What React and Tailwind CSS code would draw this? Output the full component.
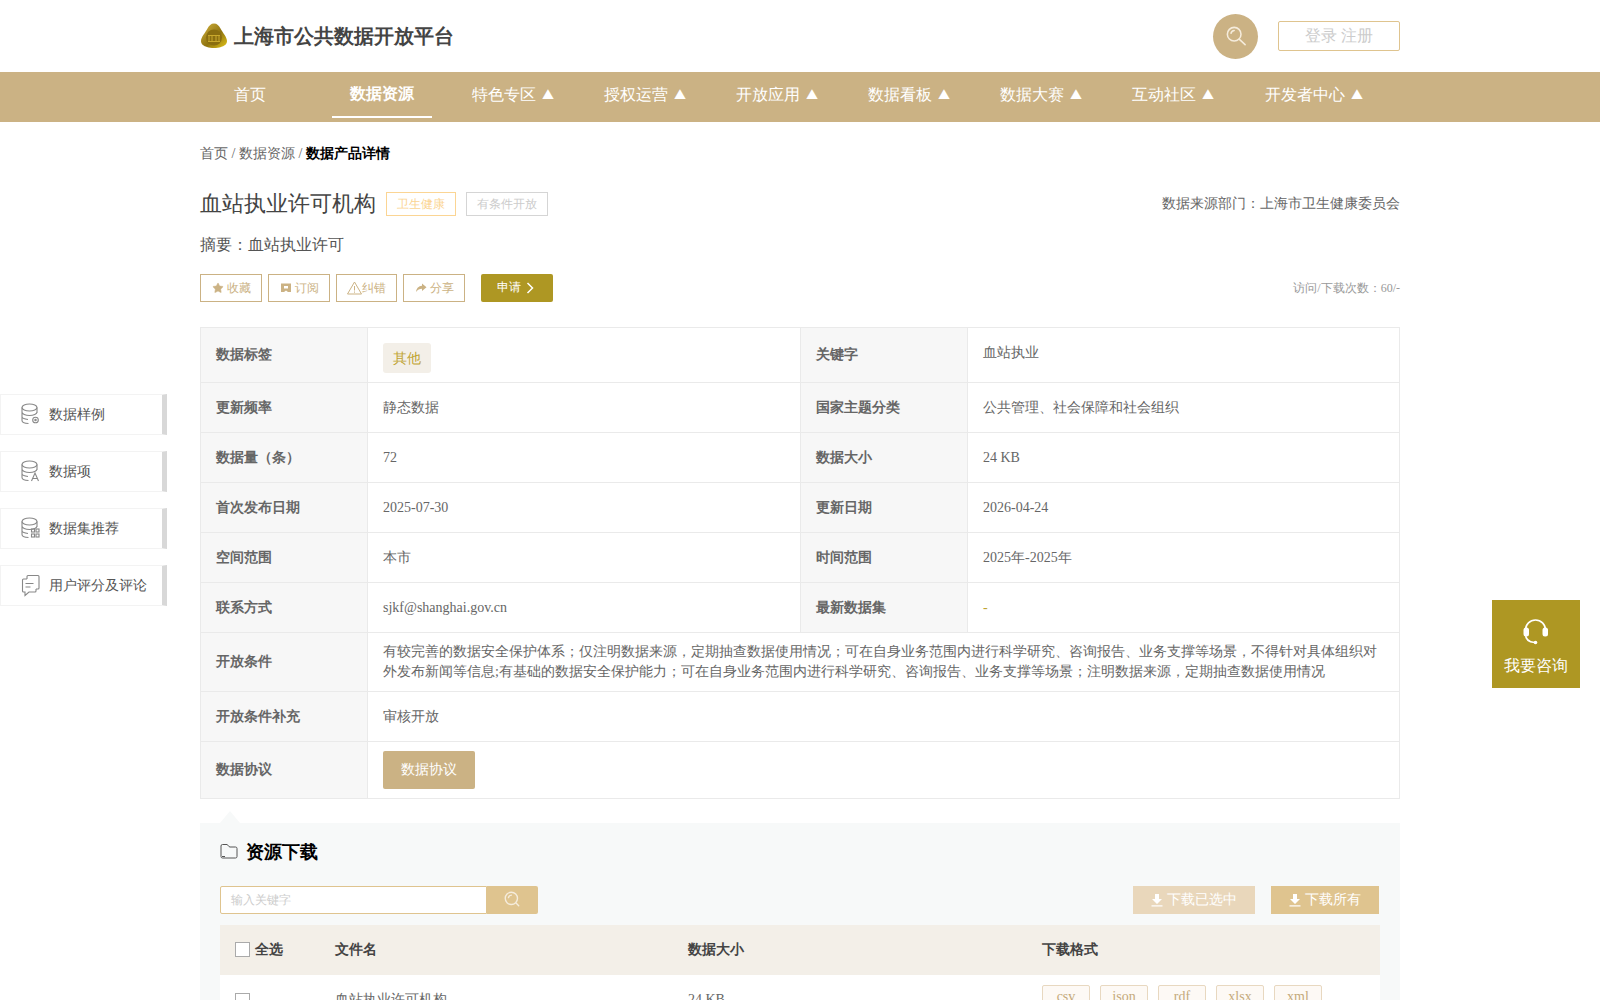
import React from "react";
import { Star } from "lucide-react";

const FONT = '"Liberation Serif", serif';

const Logo = () => (
  <svg width="28" height="26" viewBox="0 0 28 26" className="shrink-0">
    <defs>
      <linearGradient id="g" x1="0" y1="0" x2="1" y2="1">
        <stop offset="0" stopColor="#d8b640" />
        <stop offset="0.55" stopColor="#8f7410" />
        <stop offset="1" stopColor="#e2c418" />
      </linearGradient>
    </defs>
    <path d="M14 .5c3 0 5 2 6.500 5 2 4 6.500 8.500 6.500 12.500 0 3.500-3 5-6 6-4 1.300-10 1.300-14 0-3-1-6-2.500-6-6 0-4 4.500-8.500 6.500-12.500 1.500-3 3.500-5 6.500-5z" fill="url(#g)" />
    <circle cx="14" cy="14.500" r="8" fill="#8a6e10" />
    <path d="M8 12.500h12M9 12.500v6M12 12.500v6M16 12.500v6M19 12.500v6M8 18.500h12" stroke="#c9a92e" strokeWidth="1" fill="none" />
  </svg>
);

const Search = ({ size = 20, handle = true }) => (
  <svg width={size} height={size} viewBox="0 0 22 22" fill="none" stroke="#f5ecdc" strokeWidth="1.700">
    <circle cx="9" cy="9" r="7.500" />
    <path d={handle ? "M14.500 14.500l6.500 6" : "M15 15l3 3"} strokeLinecap="round" />
    <path d="M5.500 8a4 4 0 0 1 3.500-3" strokeLinecap="round" />
  </svg>
);

const DbBase = () => (
  <>
    <ellipse cx="8.500" cy="4.500" rx="7.500" ry="3.500" />
    <path d="M1 4.500v13c0 1.600 3 2.800 6.500 3M1 9c0 1.900 3.400 3.500 7.500 3.500S16 10.900 16 9M16 4.500V10M1 13.500c0 1.500 2.600 2.700 6 3" />
  </>
);

const side = [
  {
    t: "数据样例",
    i: (
      <>
        <DbBase />
        <circle cx="14.500" cy="17" r="2.800" />
        <circle cx="14.500" cy="17" r="0.700" />
      </>
    ),
  },
  {
    t: "数据项",
    i: (
      <>
        <DbBase />
        <path d="M10.500 21l3.500-8 3.500 8M11.800 18.500h4.600" />
      </>
    ),
  },
  {
    t: "数据集推荐",
    i: (
      <>
        <DbBase />
        <rect x="10.500" y="12" width="3" height="3" />
        <rect x="15" y="12" width="3" height="3" />
        <rect x="10.500" y="17" width="3" height="3" />
        <rect x="15" y="17" width="3" height="3" />
      </>
    ),
  },
  {
    t: "用户评分及评论",
    i: (
      <>
        <path d="M6 5H2.500A1 1 0 0 0 1.500 6v11a1 1 0 0 0 1 1H4v3.500L8 18h6a1 1 0 0 0 1-1v-2" />
        <path d="M6 5V2.500a1 1 0 0 1 1-1h10a1 1 0 0 1 1 1V14a1 1 0 0 1-1 1H15" />
        <path d="M4.500 9.500h8M4.500 13h5" />
      </>
    ),
  },
];

const navItems = ["特色专区", "授权运营", "开放应用", "数据看板", "数据大赛", "互动社区"];

const Tri = () => <span className="inline-block w-[16px] text-center font-['Noto_Sans_CJK_SC'] text-[12px] leading-none">▲</span>;

const Label = ({ children }) => (
  <td className="border border-[#eaeaea] bg-[#f7f7f7] pb-[1px] pl-[15px] text-[14px] font-bold text-[#666]">{children}</td>
);
const Val = ({ children, span, className = "" }) => (
  <td colSpan={span} className={`border border-[#eaeaea] px-[15px] text-[14px] text-[#666] ${className}`}>
    {children}
  </td>
);

const Row = ({ h, a, b, c, d }) => (
  <tr className={h}>
    <Label>{a}</Label>
    <Val>{b}</Val>
    <Label>{c}</Label>
    <Val>{d}</Val>
  </tr>
);

const ActionBtn = ({ w, icon, t, gap = "gap-[3px]" }) => (
  <div className={`flex ${w} h-[28px] items-center justify-center ${gap} border border-[#cbb284] text-[12px] text-[#cbb284]`}>
    {icon}
    <span>{t}</span>
  </div>
);

const Dl = () => (
  <svg width="14" height="14" viewBox="0 0 14 14" fill="#fff">
    <path d="M5 1h4v5h3l-5 5-5-5h3z" />
    <rect x="1.500" y="12.300" width="11" height="1.200" />
  </svg>
);

export default function App() {
  return (
    <div className="relative h-[1000px] w-full overflow-hidden bg-white" style={{ fontFamily: FONT }}>
      <header className="flex h-[72px] items-center justify-center">
        <div className="flex w-[1200px] items-center">
          <Logo />
          <span className="ml-[6px] text-[20px] font-bold text-[#444]">上海市公共数据开放平台</span>
          <div className="ml-auto flex h-[45px] w-[45px] items-center justify-center rounded-full bg-[#cbb284]">
            <Search />
          </div>
          <div className="ml-[20px] flex h-[30px] w-[122px] items-center justify-center rounded-[2px] border border-[#dfc48f] text-[16px] text-[#ccc]">
            登录 注册
          </div>
        </div>
      </header>

      <nav className="h-[50px] bg-[#cbb284]">
        <div className="mx-auto flex h-full w-[1200px] gap-[32px] text-[16px] text-white">
          <div className="flex w-[100px] items-center justify-center pb-[5px]">首页</div>
          <div className="flex h-[46px] w-[100px] items-center justify-center border-b-2 border-white pb-[1px] font-bold">数据资源</div>
          {navItems.map((t) => (
            <div key={t} className="flex w-[100px] items-center justify-center pb-[5px]">
              <span className="whitespace-nowrap">
                {t} <Tri />
              </span>
            </div>
          ))}
          <div className="flex w-[118px] items-center justify-center pb-[5px]">
            <span className="whitespace-nowrap">
              开发者中心 <Tri />
            </span>
          </div>
        </div>
      </nav>

      <main className="mx-auto w-[1200px]">
        <div className="flex h-[62px] items-center text-[14px] text-[#666]">
          <p>
            首页 / 数据资源 / <span className="font-bold text-black">数据产品详情</span>
          </p>
        </div>

        <div className="flex h-[39px] items-center">
          <h1 className="text-[22px] text-[#444]">血站执业许可机构</h1>
          <span className="ml-[10px] flex h-[24px] w-[70px] items-center justify-center border border-[#fbd594] text-[12px] text-[#fbd594]">卫生健康</span>
          <span className="ml-[10px] flex h-[24px] w-[82px] items-center justify-center border border-[#d5d5d5] text-[12px] text-[#ccc]">有条件开放</span>
          <span className="ml-auto text-[14px] text-[#666]">数据来源部门：上海市卫生健康委员会</span>
        </div>

        <div className="mt-[10px] h-[24px] text-[16px] leading-[24px] text-[#555]">摘要：血站执业许可</div>

        <div className="mt-[17px] flex h-[28px] items-center">
          <div className="flex gap-[6px]">
            <ActionBtn w="w-[62px]" icon={<Star size={12} fill="#cbb284" strokeWidth={1} />} t="收藏" />
            <ActionBtn
              w="w-[62px]"
              icon={
                <svg width="12" height="12" viewBox="0 0 12 12" fill="#cbb284">
                  <path d="M1 1.500h10v8.500H8L6 8.500 4 10H1zM4 4v2.500h4V4z" fillRule="evenodd" />
                </svg>
              }
              t="订阅"
            />
            <ActionBtn
              w="w-[61px]"
              gap="gap-[0px]"
              icon={
                <svg width="15" height="14" viewBox="0 0 15 14" fill="none" stroke="#cbb284" strokeWidth="1">
                  <path d="M7.500 1L14.500 13H.5z" strokeLinejoin="round" />
                  <path d="M7.500 5v4.500M7.500 10.500v1.200" />
                </svg>
              }
              t="纠错"
            />
            <ActionBtn
              w="w-[62px]"
              icon={
                <svg width="12" height="12" viewBox="0 0 12 12" fill="#cbb284">
                  <path d="M7 1.500l4.500 3.800L7 9V6.700C4.500 6.700 2.700 7.500 1 10 1.500 6.500 3.500 4 7 3.800z" />
                </svg>
              }
              t="分享"
            />
          </div>
          <div className="ml-[16px] flex h-[28px] w-[72px] items-center justify-center gap-[5px] rounded-[2px] bg-[#ae9723] pb-[3px] pr-[3px] text-[12px] text-white">
            申请
            <svg width="8" height="12" viewBox="0 0 8 12" fill="none" stroke="#fff" strokeWidth="1.500" className="mt-[2px]">
              <path d="M1.500 1l5 5-5 5" />
            </svg>
          </div>
          <span className="ml-auto text-[12px] text-[#999]">访问/下载次数：60/-</span>
        </div>

        <table className="mt-[25px] w-[1200px] table-fixed border-collapse">
          <colgroup>
            <col className="w-[167px]" />
            <col className="w-[433px]" />
            <col className="w-[167px]" />
            <col />
          </colgroup>
          <tbody>
            <tr className="h-[55px]">
              <Label>
                <span>数据标签</span>
              </Label>
              <Val>
                <span className="mt-[6px] flex h-[30px] w-[48px] items-center justify-center rounded-[3px] bg-[#f3efe8] text-[14px] text-[#bfa433]">其他</span>
              </Val>
              <Label>关键字</Label>
              <Val>
                <span className="relative -top-[3px]">血站执业</span>
              </Val>
            </tr>
            <Row h="h-[50px]" a="更新频率" b="静态数据" c="国家主题分类" d="公共管理、社会保障和社会组织" />
            <Row h="h-[50px]" a="数据量（条）" b="72" c="数据大小" d="24 KB" />
            <Row h="h-[50px]" a="首次发布日期" b="2025-07-30" c="更新日期" d="2026-04-24" />
            <Row h="h-[50px]" a="空间范围" b="本市" c="时间范围" d="2025年-2025年" />
            <Row h="h-[50px]" a="联系方式" b="sjkf@shanghai.gov.cn" c="最新数据集" d={<span className="text-[#bfa433]">-</span>} />
            <tr className="h-[59px]">
              <Label>开放条件</Label>
              <Val span={3} className="pb-[1px] leading-[20px]">
                有较完善的数据安全保护体系；仅注明数据来源，定期抽查数据使用情况；可在自身业务范围内进行科学研究、咨询报告、业务支撑等场景，不得针对具体组织对外发布新闻等信息;有基础的数据安全保护能力；可在自身业务范围内进行科学研究、咨询报告、业务支撑等场景；注明数据来源，定期抽查数据使用情况
              </Val>
            </tr>
            <tr className="h-[50px]">
              <Label>开放条件补充</Label>
              <Val span={3}>审核开放</Val>
            </tr>
            <tr className="h-[57px]">
              <Label>数据协议</Label>
              <Val span={3}>
                <span className="flex h-[38px] w-[92px] items-center justify-center rounded-[2px] bg-[#cbb284] pb-[1px] text-white">数据协议</span>
              </Val>
            </tr>
          </tbody>
        </table>

        <section className="relative mt-[24px] h-[300px] bg-[#f7f9f9] px-[20px]">
          <div className="absolute -top-[12px] left-[20px] h-0 w-0 border-x-[10px] border-b-[12px] border-x-transparent border-b-[#f7f9f9]" />
          <div className="flex h-[58px] items-center pt-[1px]">
            <svg width="18" height="16" viewBox="0 0 18 16" fill="none" stroke="#555" strokeWidth="1" className="-mt-[3px]">
              <path d="M1 3a1.500 1.500 0 0 1 1.500-1.500H7c1 0 1.500 2.500 3 2.500h5.500A1.500 1.500 0 0 1 17 5.500v8a1.500 1.500 0 0 1-1.500 1.500h-13A1.500 1.500 0 0 1 1 13.500z" />
              <path d="M2 13.500h3" />
            </svg>
            <h2 className="ml-[8px] text-[18px] font-bold text-black">资源下载</h2>
          </div>
          <div className="mt-[5px] flex h-[28px] items-center">
            <div className="flex h-[28px] w-[267px] items-center rounded-l-[2px] border border-[#dfc48f] bg-white pl-[10px] text-[12px] text-[#ccc]">输入关键字</div>
            <div className="flex h-[28px] w-[51px] items-center justify-center rounded-r-[2px] bg-[#dfc48f]">
              <Search size={18} handle={false} />
            </div>
            <div className="ml-auto mr-[16px] flex h-[28px] w-[122px] items-center justify-center gap-[3px] bg-[#e9d7bb] pb-[1px] pr-[2px] text-[14px] text-white">
              <Dl />
              下载已选中
            </div>
            <div className="mr-[1px] flex h-[28px] w-[108px] items-center justify-center gap-[3px] bg-[#dfc48f] pb-[1px] pr-[2px] text-[14px] text-white">
              <Dl />
              下载所有
            </div>
          </div>
          <div className="mt-[11px] grid h-[50px] grid-cols-[100px_353px_354px_1fr] items-center bg-[#f3efe8] pb-[1px] pl-[15px] text-[14px] font-bold text-[#444]">
            <div className="flex items-center gap-[5px]">
              <span className="h-[15px] w-[15px] border border-[#aaa] bg-white" />
              全选
            </div>
            <div>文件名</div>
            <div>数据大小</div>
            <div>下载格式</div>
          </div>
          <div className="grid h-[60px] grid-cols-[100px_353px_354px_1fr] bg-white pl-[15px] pt-[10px] text-[14px] text-[#666]">
            <div>
              <span className="mt-[8px] block h-[15px] w-[15px] border border-[#aaa] bg-white" />
            </div>
            <div className="pt-[4px]">血站执业许可机构</div>
            <div className="pt-[4px]">24 KB</div>
            <div className="flex gap-[10px]">
              {["csv", "json", "rdf", "xlsx", "xml"].map((f) => (
                <span key={f} className="flex h-[32px] w-[48px] items-start justify-center rounded-[2px] border border-[#e8d8c0] bg-[#fdf9f5] pt-[1px] leading-[20px] text-[#c4a97b]">
                  {f}
                </span>
              ))}
            </div>
          </div>
        </section>
      </main>

      <aside className="absolute left-0 top-[394px] flex w-[167px] flex-col gap-[16px]">
        {side.map((s) => (
          <div key={s.t} className="flex h-[41px] items-center border border-[#f3f3f3] border-r-[5px] border-r-[#d8d8d8] bg-white pl-[20px]">
            <svg width="19" height="23" viewBox="0 0 19 23" fill="none" stroke="#888" strokeWidth="1.100" className="shrink-0">
              {s.i}
            </svg>
            <span className="ml-[9px] text-[14px] text-[#555]">{s.t}</span>
          </div>
        ))}
      </aside>

      <div className="absolute left-[1492px] top-[600px] flex h-[88px] w-[88px] flex-col items-center bg-[#ae9723] pt-[18px] text-white">
        <svg width="28" height="28" viewBox="0 0 28 28" fill="none" stroke="#fff">
          <path d="M3.500 12a10 10 0 0 1 20 0" strokeWidth="1.600" />
          <path d="M3.500 16c0 5 3 8 9 8.500" strokeWidth="1.600" />
          <rect x="1.500" y="9.500" width="5.500" height="9" rx="2.500" fill="#fff" stroke="none" />
          <rect x="20.500" y="9.500" width="5.500" height="9" rx="2.500" fill="#fff" stroke="none" />
          <circle cx="13.500" cy="24.500" r="1.800" fill="#fff" stroke="none" />
        </svg>
        <span className="mt-[8px] text-[16px] leading-[24px]">我要咨询</span>
      </div>
    </div>
  );
}
